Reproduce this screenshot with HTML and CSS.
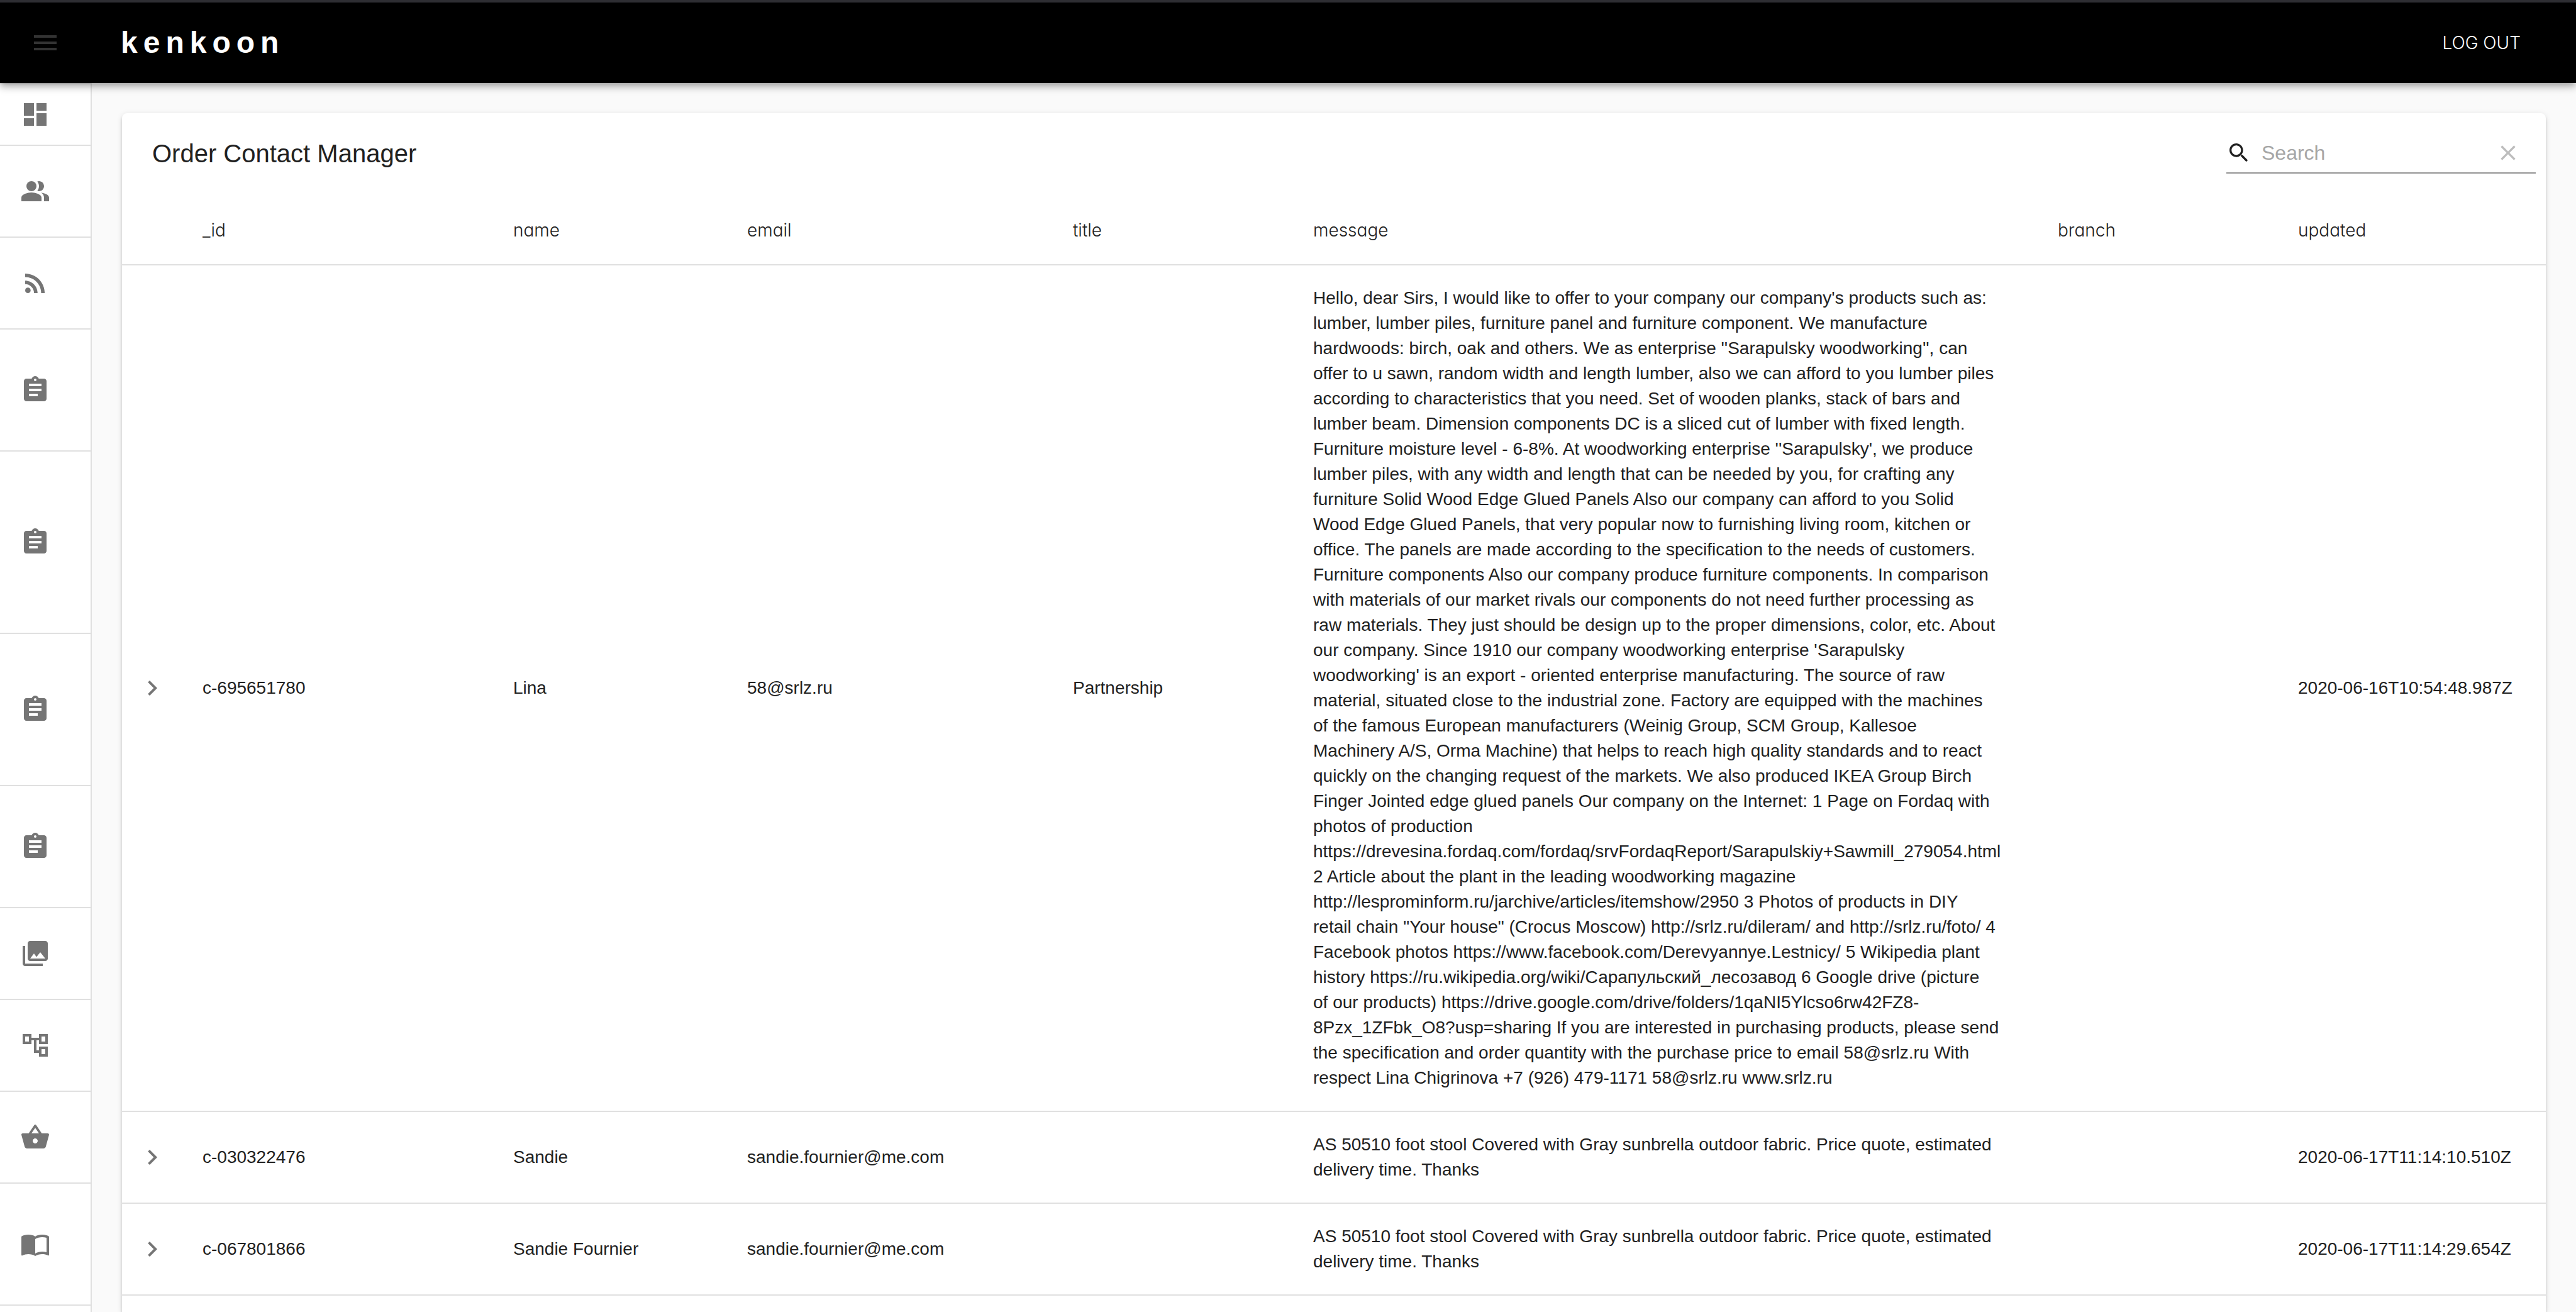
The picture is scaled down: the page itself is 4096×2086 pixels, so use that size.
FILE: index.html
```html
<!DOCTYPE html>
<html lang="en">
<head>
<meta charset="utf-8">
<title>Order Contact Manager</title>
<link rel="stylesheet" href="styles.css">
</head>
<body>
<svg class="sprite" aria-hidden="true">
  <symbol id="i-assignment" viewBox="0 0 24 24"><path d="M19 3h-4.18C14.4 1.84 13.3 1 12 1c-1.3 0-2.4.84-2.82 2H5c-1.1 0-2 .9-2 2v14c0 1.1.9 2 2 2h14c1.1 0 2-.9 2-2V5c0-1.1-.9-2-2-2zm-7 0c.55 0 1 .45 1 1s-.45 1-1 1-1-.45-1-1 .45-1 1-1zm2 14H7v-2h7v2zm3-4H7v-2h10v2zm0-4H7V7h10v2z"/></symbol>
  <symbol id="i-chevron" viewBox="0 0 24 24"><path d="M10 6L8.59 7.41 13.17 12l-4.58 4.59L10 18l6-6z"/></symbol>
</svg>

<header class="appbar">
  <button class="icon-button menu-button" type="button" aria-label="Open menu">
    <svg class="icon" viewBox="0 0 24 24"><path d="M3 18h18v-2H3v2zm0-5h18v-2H3v2zm0-7v2h18V6H3z"/></svg>
  </button>
  <a class="brand" href="#">kenkoon</a>
  <button class="logout" type="button">LOG OUT</button>
</header>

<div class="layout">
  <nav class="sidebar" aria-label="Sections">
    <a class="nav-item nav-first" href="#" aria-label="Dashboard"><svg class="icon" viewBox="0 0 24 24"><path d="M3 13h8V3H3v10zm0 8h8v-6H3v6zm10 0h8V11h-8v10zm0-18v6h8V3h-8z"/></svg></a>
    <a class="nav-item" href="#" aria-label="Users"><svg class="icon" viewBox="0 0 24 24"><path d="M16.67 13.13C18.04 14.06 19 15.32 19 17v3h4v-3c0-2.18-3.57-3.47-6.33-3.87z"/><circle cx="9" cy="8" r="4"/><path d="M15 12c2.21 0 4-1.79 4-4s-1.79-4-4-4c-.47 0-.91.1-1.33.24C14.5 5.27 15 6.58 15 8s-.5 2.73-1.33 3.76c.42.14.86.24 1.33.24zM9 13c-2.67 0-8 1.34-8 4v3h16v-3c0-2.66-5.33-4-8-4z"/></svg></a>
    <a class="nav-item" href="#" aria-label="Feed"><svg class="icon" viewBox="0 0 24 24"><circle cx="6.18" cy="17.82" r="2.18"/><path d="M4 4.44v2.83c7.03 0 12.73 5.7 12.73 12.73h2.83c0-8.59-6.97-15.56-15.56-15.56zm0 5.66v2.83c3.9 0 7.07 3.17 7.07 7.07h2.83c0-5.47-4.43-9.9-9.9-9.9z"/></svg></a>
    <a class="nav-item nav-2" href="#" aria-label="Orders"><svg class="icon"><use href="#i-assignment"/></svg></a>
    <a class="nav-item nav-4" href="#" aria-label="Order contacts"><svg class="icon"><use href="#i-assignment"/></svg></a>
    <a class="nav-item nav-3" href="#" aria-label="Requests"><svg class="icon"><use href="#i-assignment"/></svg></a>
    <a class="nav-item nav-2" href="#" aria-label="Forms"><svg class="icon"><use href="#i-assignment"/></svg></a>
    <a class="nav-item" href="#" aria-label="Gallery"><svg class="icon" viewBox="0 0 24 24"><path d="M22 16V4c0-1.1-.9-2-2-2H8c-1.1 0-2 .9-2 2v12c0 1.1.9 2 2 2h12c1.1 0 2-.9 2-2zm-11-4l2.03 2.71L16 11l4 5H8l3-4zM2 6v14c0 1.1.9 2 2 2h14v-2H4V6H2z"/></svg></a>
    <a class="nav-item" href="#" aria-label="Categories"><svg class="icon" viewBox="0 0 24 24"><path d="M22 11V3h-7v3H9V3H2v8h7V8h2v10h4v3h7v-8h-7v3h-2V8h2v3h7zM7 9H4V5h3v4zm10 6h3v4h-3v-4zm0-10h3v4h-3V5z"/></svg></a>
    <a class="nav-item" href="#" aria-label="Products"><svg class="icon" viewBox="0 0 24 24"><path d="M17.21 9l-4.38-6.56c-.19-.28-.51-.42-.83-.42-.32 0-.64.14-.83.43L6.79 9H2c-.55 0-1 .45-1 1 0 .09.01.18.04.27l2.54 9.27c.23.84 1 1.46 1.92 1.46h13c.92 0 1.69-.62 1.93-1.46l2.54-9.27L23 10c0-.55-.45-1-1-1h-4.79zM9 9l3-4.4L15 9H9zm3 8c-1.1 0-2-.9-2-2s.9-2 2-2 2 .9 2 2-.9 2-2 2z"/></svg></a>
    <a class="nav-item nav-2" href="#" aria-label="Catalogue"><svg class="icon" viewBox="0 0 24 24"><path d="M21 5c-1.11-.35-2.33-.5-3.5-.5-1.95 0-4.05.4-5.5 1.5-1.45-1.1-3.55-1.5-5.5-1.5S2.45 4.9 1 6v14.65c0 .25.25.5.5.5.1 0 .15-.05.25-.05C3.1 20.45 5.05 20 6.5 20c1.95 0 4.05.4 5.5 1.5 1.35-.85 3.8-1.5 5.5-1.5 1.65 0 3.35.3 4.75 1.05.1.05.15.05.25.05.25 0 .5-.25.5-.5V6c-.6-.45-1.25-.75-2-1zm0 13.5c-1.1-.35-2.3-.5-3.5-.5-1.7 0-4.15.65-5.5 1.5V8c1.35-.85 3.8-1.5 5.5-1.5 1.2 0 2.4.15 3.5.5v11.5z"/></svg></a>
  </nav>

  <main class="content">
    <section class="card">
      <div class="toolbar">
        <h1 class="title">Order Contact Manager</h1>
        <div class="search">
          <label class="search-label" for="search" aria-label="Search"><svg class="icon-small" viewBox="0 0 24 24"><path d="M15.5 14h-.79l-.28-.27C15.41 12.59 16 11.11 16 9.5 16 5.91 13.09 3 9.5 3S3 5.91 3 9.5 5.91 16 9.5 16c1.61 0 3.09-.59 4.23-1.57l.27.28v.79l5 4.99L20.49 19l-4.99-5zm-6 0C7.01 14 5 11.99 5 9.5S7.01 5 9.5 5 14 7.01 14 9.5 11.99 14 9.5 14z"/></svg></label>
          <input class="search-input" id="search" type="text" placeholder="Search">
          <button class="icon-button clear-button" type="button" aria-label="Clear search"><svg class="icon-small" viewBox="0 0 24 24"><path d="M19 6.41L17.59 5 12 10.59 6.41 5 5 6.41 10.59 12 5 17.59 6.41 19 12 13.41 17.59 19 19 17.59 13.41 12z"/></svg></button>
        </div>
      </div>
      <table class="table">
        <colgroup>
          <col class="col-expand"><col class="col-id"><col class="col-name"><col class="col-email"><col class="col-title"><col><col class="col-branch"><col class="col-updated">
        </colgroup>
        <thead>
          <tr><th></th><th scope="col">_id</th><th scope="col">name</th><th scope="col">email</th><th scope="col">title</th><th scope="col">message</th><th scope="col">branch</th><th scope="col">updated</th></tr>
        </thead>
        <tbody>
          <tr>
            <td class="expand"><button class="icon-button" type="button" aria-label="Show details"><svg class="icon"><use href="#i-chevron"/></svg></button></td>
            <td>c-695651780</td>
            <td>Lina</td>
            <td>58@srlz.ru</td>
            <td>Partnership</td>
            <td class="message">Hello, dear Sirs, I would like to offer to your company our company's products such as: lumber, lumber piles, furniture panel and furniture component. We manufacture hardwoods: birch, oak and others. We as enterprise ''Sarapulsky woodworking'', can offer to u sawn, random width and length lumber, also we can afford to you lumber piles according to characteristics that you need. Set of wooden planks, stack of bars and lumber beam. Dimension components DC is a sliced cut of lumber with fixed length. Furniture moisture level - 6-8%. At woodworking enterprise ''Sarapulsky', we produce lumber piles, with any width and length that can be needed by you, for crafting any furniture Solid Wood Edge Glued Panels Also our company can afford to you Solid Wood Edge Glued Panels, that very popular now to furnishing living room, kitchen or office. The panels are made according to the specification to the needs of customers. Furniture components Also our company produce furniture components. In comparison with materials of our market rivals our components do not need further processing as raw materials. They just should be design up to the proper dimensions, color, etc. About our company. Since 1910 our company woodworking enterprise 'Sarapulsky woodworking' is an export - oriented enterprise manufacturing. The source of raw material, situated close to the industrial zone. Factory are equipped with the machines of the famous European manufacturers (Weinig Group, SCM Group, Kallesoe Machinery A/S, Orma Machine) that helps to reach high quality standards and to react quickly on the changing request of the markets. We also produced IKEA Group Birch Finger Jointed edge glued panels Our company on the Internet: 1 Page on Fordaq with photos of production https://drevesina.fordaq.com/fordaq/srvFordaqReport/Sarapulskiy+Sawmill_279054.html 2 Article about the plant in the leading woodworking magazine http://lesprominform.ru/jarchive/articles/itemshow/2950 3 Photos of products in DIY retail chain "Your house" (Crocus Moscow) http://srlz.ru/dileram/ and http://srlz.ru/foto/ 4 Facebook photos https://www.facebook.com/Derevyannye.Lestnicy/ 5 Wikipedia plant history https://ru.wikipedia.org/wiki/Сарапульский_лесозавод 6 Google drive (picture of&nbsp;our products) https://drive.google.com/drive/folders/1qaNI5Ylcso6rw42FZ8-8Pzx_1ZFbk_O8?usp=sharing If you are interested in purchasing products, please send the specification and order quantity with the purchase price to email 58@srlz.ru With respect Lina Chigrinova +7 (926) 479-1171 58@srlz.ru www.srlz.ru</td>
            <td></td>
            <td>2020-06-16T10:54:48.987Z</td>
          </tr>
          <tr>
            <td class="expand"><button class="icon-button" type="button" aria-label="Show details"><svg class="icon"><use href="#i-chevron"/></svg></button></td>
            <td>c-030322476</td>
            <td>Sandie</td>
            <td>sandie.fournier@me.com</td>
            <td></td>
            <td class="message">AS 50510 foot stool Covered with Gray sunbrella outdoor fabric. Price quote, estimated delivery time. Thanks</td>
            <td></td>
            <td>2020-06-17T11:14:10.510Z</td>
          </tr>
          <tr>
            <td class="expand"><button class="icon-button" type="button" aria-label="Show details"><svg class="icon"><use href="#i-chevron"/></svg></button></td>
            <td>c-067801866</td>
            <td>Sandie Fournier</td>
            <td>sandie.fournier@me.com</td>
            <td></td>
            <td class="message">AS 50510 foot stool Covered with Gray sunbrella outdoor fabric. Price quote, estimated delivery time. Thanks</td>
            <td></td>
            <td>2020-06-17T11:14:29.654Z</td>
          </tr>
        </tbody>
      </table>
    </section>
  </main>
</div>
</body>
</html>
```
FILE: styles.css
```css
* {
  box-sizing: border-box;
}

body {
  margin: 0;
  height: 100vh;
  overflow: hidden;
  display: flex;
  flex-direction: column;
  background: #fafafa;
  color: #212121;
  font-family: "Liberation Sans", Arial, sans-serif;
  font-size: 28px;
  line-height: 40px;
}

.sprite {
  display: none;
}

button {
  border: 0;
  background: none;
  color: inherit;
  font: inherit;
  cursor: pointer;
}

.icon,
.icon-small {
  display: block;
  width: 48px;
  height: 48px;
  fill: currentColor;
}

.icon-small {
  width: 40px;
  height: 40px;
}

.icon-button {
  display: block;
  padding: 0;
}

/* App bar */

.appbar {
  position: relative;
  z-index: 1;
  display: flex;
  align-items: center;
  flex: none;
  height: 132px;
  padding: 0 48px;
  border-top: 4px solid #2e2e33;
  background: #000;
  color: #fff;
  box-shadow: 0 4px 8px -2px rgba(0, 0, 0, 0.2), 0 8px 10px rgba(0, 0, 0, 0.14), 0 2px 20px rgba(0, 0, 0, 0.12);
}

.menu-button {
  color: #333;
}

.brand {
  margin-left: 96px;
  color: inherit;
  font-size: 48px;
  font-weight: 700;
  line-height: 56px;
  letter-spacing: 9px;
  text-decoration: none;
}

.logout {
  margin-left: auto;
  padding: 12px 40px;
  font-family: Inter, "Liberation Sans", sans-serif;
  font-weight: 300;
}

/* Side navigation */

.layout {
  display: flex;
  flex: 1;
  min-height: 0;
}

.sidebar {
  flex: none;
  width: 146px;
  border: solid #e0e0e0;
  border-width: 2px 2px 0 0;
  background: #fff;
}

.nav-item {
  display: flex;
  align-items: center;
  height: 146px;
  padding-left: 32px;
  border-bottom: 2px solid #e0e0e0;
  color: #757575;
}

.nav-first {
  height: 98px;
}

.nav-2 {
  height: 194px;
}

.nav-3 {
  height: 242px;
}

.nav-4 {
  height: 290px;
}

/* Content */

.content {
  display: flex;
  flex: 1;
  min-width: 0;
  padding: 48px 48px 0;
}

.card {
  flex: 1;
  min-width: 0;
  border-radius: 8px 8px 0 0;
  background: #fff;
  box-shadow: 0 6px 2px -4px rgba(0, 0, 0, 0.2), 0 4px 4px rgba(0, 0, 0, 0.14), 0 2px 10px rgba(0, 0, 0, 0.12);
}

.toolbar {
  display: flex;
  align-items: center;
  justify-content: space-between;
  height: 128px;
  padding: 0 16px 0 48px;
}

.title {
  margin: 0;
  font-size: 40px;
  font-weight: 400;
  line-height: 64px;
}

.search {
  display: flex;
  align-items: center;
  width: 492px;
  height: 64px;
  border-bottom: 2px solid #949494;
}

.search-label {
  margin-right: 16px;
}

.search-input {
  flex: 1;
  min-width: 0;
  padding: 0;
  border: 0;
  outline: 0;
  background: none;
  color: inherit;
  font: inherit;
  font-size: 32px;
}

.search-input::placeholder {
  color: #a6a6a6;
  opacity: 1;
}

.clear-button {
  margin: 0 24px;
  color: #bdbdbd;
}

.table {
  width: 100%;
  border-collapse: separate;
  border-spacing: 0;
  table-layout: fixed;
}

.col-expand {
  width: 96px;
}

.col-id {
  width: 494px;
}

.col-name {
  width: 372px;
}

.col-email {
  width: 518px;
}

.col-title,
.col-branch {
  width: 382px;
}

.col-updated {
  width: 426px;
}

th,
td {
  padding: 32px;
  border-bottom: 2px solid #e0e0e0;
  text-align: left;
  vertical-align: middle;
}

th {
  padding: 34px 32px 30px;
  font-family: Inter, "Liberation Sans", sans-serif;
  font-feature-settings: "cv11";
  font-weight: 300;
  line-height: 48px;
}

.expand {
  padding: 0 24px;
  color: #757575;
}

.message {
  padding-right: 60px;
}
```
